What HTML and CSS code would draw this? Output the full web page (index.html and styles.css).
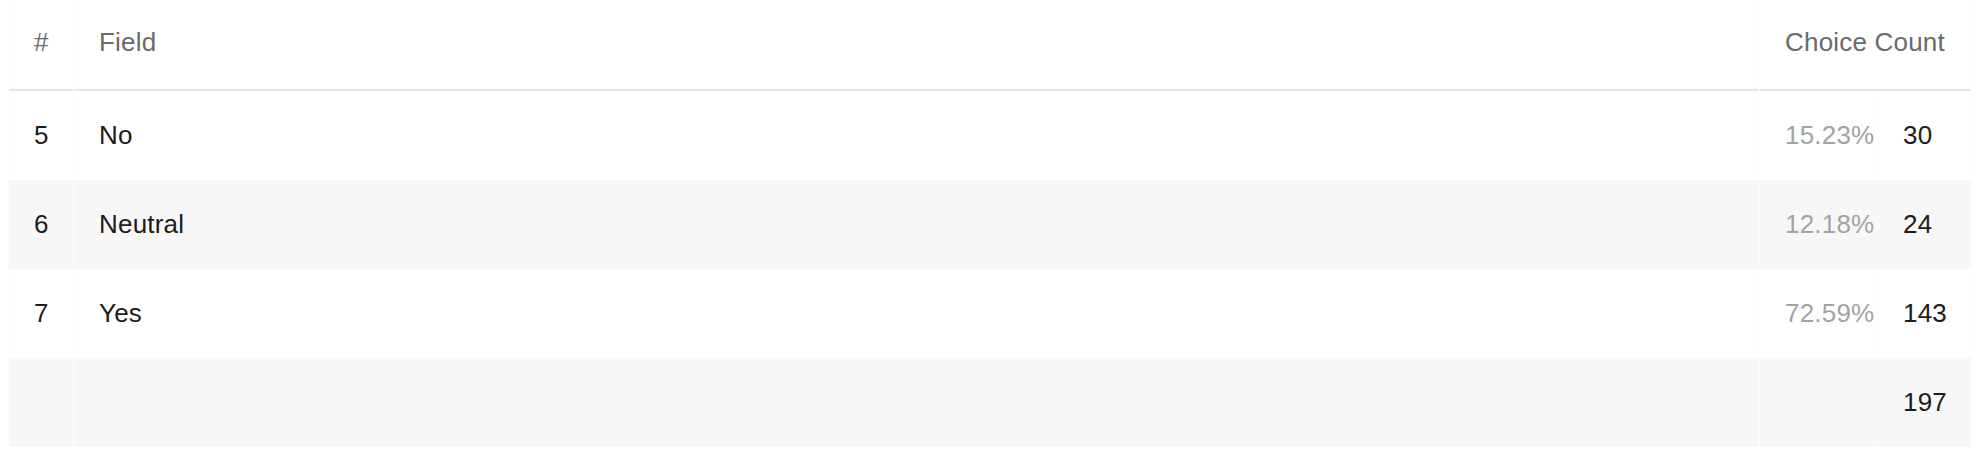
FILE: index.html
```html
<!DOCTYPE html>
<html>
<head>
<meta charset="utf-8">
<link rel="stylesheet" href="styles.css">
</head>
<body>
<table class="tbl">
  <thead>
    <tr class="head">
      <th class="c-num">#</th>
      <th class="c-field">Field</th>
      <th class="c-choice" colspan="2">Choice Count</th>
    </tr>
  </thead>
  <tbody>
    <tr class="row">
      <td class="c-num">5</td>
      <td class="c-field">No</td>
      <td class="c-pct">15.23%</td>
      <td class="c-count">30</td>
    </tr>
    <tr class="row alt">
      <td class="c-num">6</td>
      <td class="c-field">Neutral</td>
      <td class="c-pct">12.18%</td>
      <td class="c-count">24</td>
    </tr>
    <tr class="row">
      <td class="c-num">7</td>
      <td class="c-field">Yes</td>
      <td class="c-pct">72.59%</td>
      <td class="c-count">143</td>
    </tr>
    <tr class="row alt">
      <td class="c-num"></td>
      <td class="c-field"></td>
      <td class="c-pct"></td>
      <td class="c-count">197</td>
    </tr>
  </tbody>
</table>
</body>
</html>
```

FILE: styles.css
```css
html, body {
  margin: 0;
  padding: 0;
  background: #ffffff;
}
body {
  padding: 0 5px 0 8px;
  font-family: "Liberation Sans", Arial, sans-serif;
  font-size: 26px;
  letter-spacing: 0.2px;
}
.tbl {
  width: 100%;
  border-collapse: separate;
  border-spacing: 1px 0;
  background: #fdfdfd;
}
.tbl th, .tbl td {
  text-align: left;
  padding: 0 0 0 25px;
  vertical-align: middle;
  white-space: nowrap;
}
.head th {
  height: 85px;
  padding-bottom: 4px;
  font-weight: normal;
  color: #6a6a6a;
  background: #ffffff;
  border-bottom: 2px solid #e5e5e5;
}
.row td {
  height: 89px;
  color: #1c1c1c;
  background: #ffffff;
}
.row.alt td {
  background: #f7f7f7;
}
.c-num { width: 39px; }
.c-pct { width: 92px; color: #a3a3a3 !important; }
.c-count { width: 68px; }
```
